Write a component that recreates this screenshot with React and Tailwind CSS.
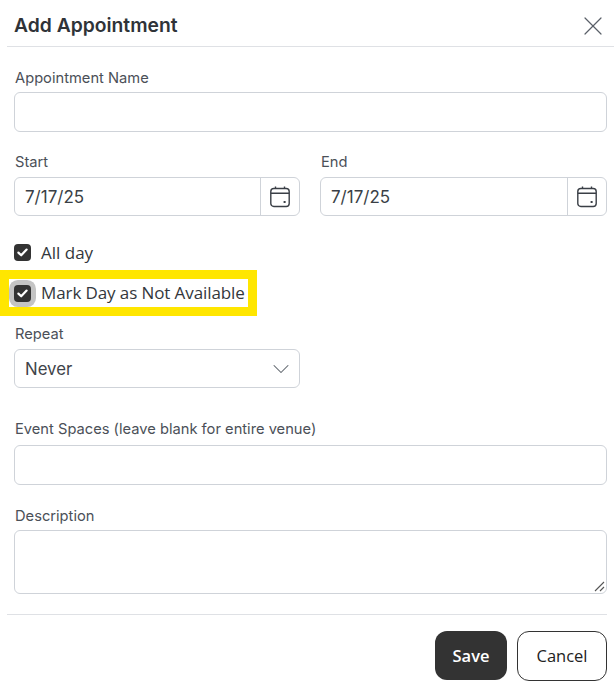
// App.jsx — Add Appointment modal
import { ChevronDown, X } from 'lucide-react';

const inter = { fontFamily: 'Inter, sans-serif' };

function FieldLabel({ children, nudge }) {
  return (
    <div className={`h-4 pl-px text-[14.7px] leading-4 text-[#4b5058] font-['Inter',sans-serif] ${nudge ? 'pt-px' : ''}`}>
      {children}
    </div>
  );
}

function CalendarIcon() {
  return (
    <svg width="20" height="22" viewBox="0 0 20 22" fill="none" stroke="#3a3f46" strokeWidth="1.4">
      <rect x="0.8" y="2.5" width="18.4" height="18" rx="3" />
      <path d="M0.8 7.2h18.4M5.5 0.5v2M14.5 0.5v2" />
      <rect x="13.6" y="15" width="2" height="2" fill="#3a3f46" stroke="none" />
    </svg>
  );
}

function DateField({ label, value, className }) {
  return (
    <div className={className}>
      <FieldLabel nudge>{label}</FieldLabel>
      <div className="mt-2 flex h-[39px] rounded-md border border-[#cfd3d9] bg-white">
        <div className="flex flex-1 items-center pl-[10px] pt-0.5 text-[17px] text-[#3a3f46] font-['Inter',sans-serif]">{value}</div>
        <div className="flex w-[39px] items-center justify-center border-l border-[#cfd3d9]">
          <CalendarIcon />
        </div>
      </div>
    </div>
  );
}

function Checkbox({ halo }) {
  return (
    <span className={`flex h-[17px] w-[17px] items-center justify-center rounded-[4px] bg-[#333333] ${halo ? 'ring-[5px] ring-[#c4c4c4]' : ''}`}>
      <svg width="11" height="9" viewBox="0 0 11 9" fill="none" stroke="white" strokeWidth="2.2" strokeLinecap="round" strokeLinejoin="round">
        <path d="M1.4 4.6 4.2 7.3 9.6 1.6" />
      </svg>
    </span>
  );
}

export default function App() {
  return (
    <div className="h-[686px] w-[614px] overflow-hidden bg-white">
      <header className="ml-[7px] flex h-[47px] items-center justify-between border-b border-[#dfe1e5] pl-[7px] pr-[5px] pt-[5px]">
        <h1 className="text-[19.3px] font-semibold text-[#2f3338]" style={inter}>Add Appointment</h1>
        <X size={32} strokeWidth={0.9} className="text-[#5a6068]" />
      </header>

      <div className="px-[7px] pr-[7px]">
        <div className="pl-[7px] pt-[23px]">
          <FieldLabel>Appointment Name</FieldLabel>
          <div className="mt-[6px] h-10 rounded-md border border-[#cfd3d9]" />

          <div className="mt-[21px] flex gap-5">
            <DateField label="Start" value="7/17/25" className="w-[286px]" />
            <DateField label="End" value="7/17/25" className="w-[287px]" />
          </div>

          <div className="mt-7 flex h-[17px] items-center gap-[10px]">
            <Checkbox />
            <span className="text-[17px] text-[#33373c] font-['Open_Sans',sans-serif]">All day</span>
          </div>
        </div>

        <div className="-ml-[7px] mt-[9px] flex h-[46px] w-[257px] items-center gap-[10px] border-[9px] border-[#ffe600] pl-[5px] font-['Open_Sans',sans-serif]">
          <Checkbox halo />
          <span className="whitespace-nowrap text-[17px] tracking-[-0.1px] text-[#33373c]">Mark Day as Not Available</span>
        </div>

        <div className="pl-[7px]">
          <div className="mt-[10px]"><FieldLabel>Repeat</FieldLabel></div>
          <div className="mt-[7px] flex h-[39px] w-[286px] items-center justify-between rounded-md border border-[#cfd3d9] pl-[10px] pr-1">
            <span className="pt-0.5 text-[16.8px] text-[#3f444a] font-['Inter',sans-serif]">Never</span>
            <ChevronDown size={28} strokeWidth={0.9} className="text-[#5a6068]" />
          </div>

          <div className="mt-[33px]"><FieldLabel>Event Spaces (leave blank for entire venue)</FieldLabel></div>
          <div className="mt-2 h-10 rounded-md border border-[#cfd3d9]" />

          <div className="mt-[22px]"><FieldLabel nudge>Description</FieldLabel></div>
          <div className="relative mt-[7px] h-16 rounded-md border border-[#cfd3d9]">
            <svg className="absolute bottom-[1px] right-[1px]" width="11" height="11" viewBox="0 0 11 11" stroke="#555" strokeWidth="1.1">
              <path d="M1 10 10 1M6 10 10 6" />
            </svg>
          </div>
        </div>

        <footer className="mt-5 flex justify-end gap-[10px] border-t border-[#dfe1e5] pt-4 font-['Open_Sans',sans-serif] text-[16.5px]">
          <button className="h-[49px] w-[72px] rounded-xl bg-[#333333] pt-0.5 font-semibold text-white">Save</button>
          <button className="h-[50px] w-[90px] rounded-xl border border-[#333333] bg-white text-[#222]">Cancel</button>
        </footer>
      </div>
    </div>
  );
}
